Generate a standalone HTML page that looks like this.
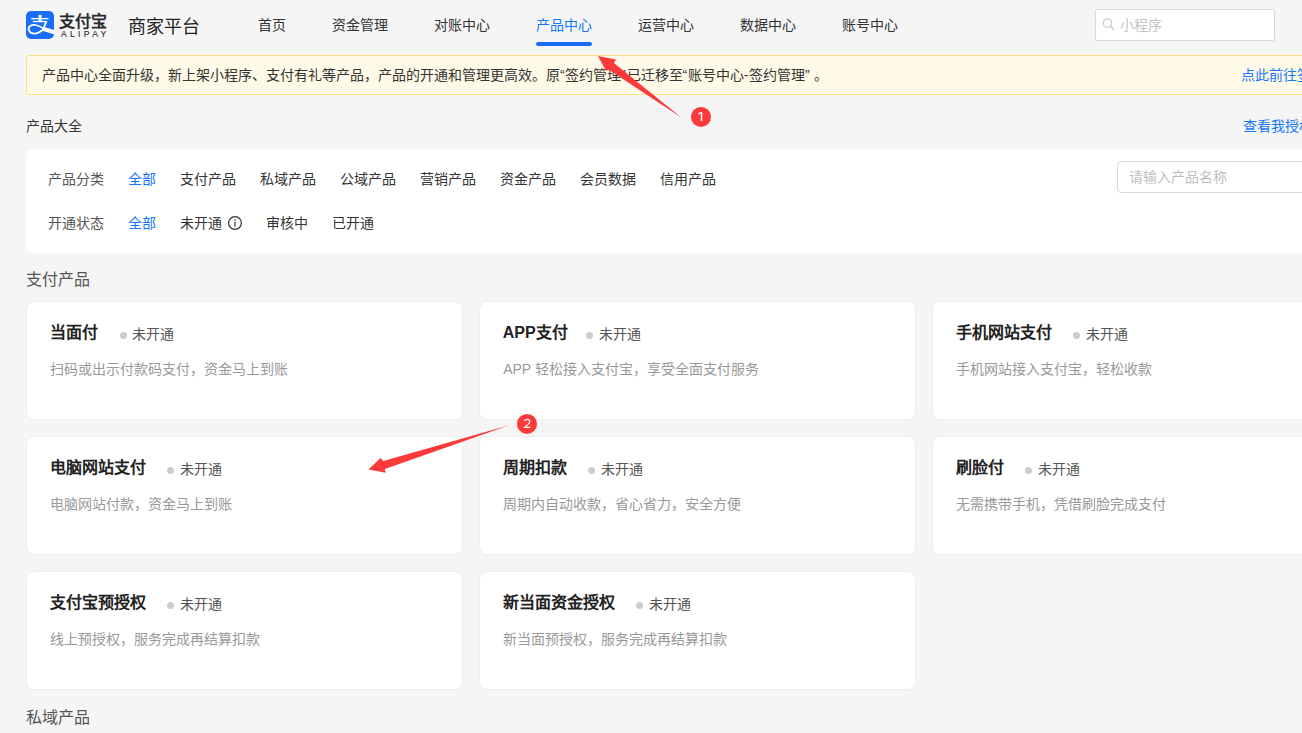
<!DOCTYPE html>
<html lang="zh-CN"><head><meta charset="utf-8">
<style>
*{box-sizing:border-box;margin:0;padding:0}
html,body{width:1302px;height:733px;overflow:hidden}
body{background:#f5f5f5;font-family:"Liberation Sans",sans-serif;color:#333;position:relative}
.abs{position:absolute;white-space:nowrap}
.logo{left:26px;top:11px;width:28px;height:28px;background:#1677ff;border-radius:6px}
.brand{left:59px;top:11.5px;font-size:16px;font-weight:bold;color:#2a2a2a;line-height:20px}
.alipay{left:61px;top:29px;font-size:8.6px;letter-spacing:3.3px;color:#2a2a2a;line-height:10px;-webkit-text-stroke:0.1px #2a2a2a}
.plat{left:128px;top:14px;font-size:18px;line-height:26px;color:#222}
.nav{top:15px;font-size:14px;line-height:20px;color:#333}
.nav.on{color:#1677ff}
.uline{left:536px;top:42px;width:56px;height:4px;border-radius:2px;background:#1b6cf5}
.search{left:1095px;top:9px;width:180px;height:32px;background:#fff;border:1px solid #d9d9d9;border-radius:2px}
.notice{left:26px;top:55px;width:1300px;height:40px;background:#fff9e7;border:1px solid #ffdf80;border-radius:2.5px}
.ntext{left:42px;top:65px;font-size:14px;line-height:20px;color:#333}
.q{letter-spacing:0.6px}
.link,.ft.link{color:#1677ff}
.panel{left:26px;top:149px;width:1300px;height:104px;background:#fff;border-radius:6px}
.ft{top:169px;font-size:14px;line-height:20px;color:#333}
.ft2{top:213px}
.pinput{left:1117px;top:161px;width:220px;height:32px;background:#fff;border:1px solid #d9d9d9;border-radius:4px}
.sec{left:26px;font-size:16px;line-height:22px;color:#555;margin-top:1.4px}
.card{position:absolute;width:437px;height:118px;background:#fff;border-radius:8px;border:1px solid #efefef}
.ct{position:absolute;left:22.8px;top:19px;font-size:16px;font-weight:bold;color:#222;line-height:22px;white-space:nowrap}
.st{position:absolute;top:21.3px;font-size:14px;color:#555;line-height:20px;white-space:nowrap;padding-left:12px}
.st:before{content:"";position:absolute;left:-0.5px;top:7.4px;width:7px;height:7px;border-radius:50%;background:#cccccc}
.dn .ct,.dn .st,.dn .desc{margin-top:1px}
.desc{position:absolute;left:23.2px;top:56.1px;font-size:14px;color:#999;line-height:20px;white-space:nowrap}
</style></head><body>
<svg class="abs" style="left:26px;top:11px" width="28" height="28" viewBox="0 0 28 28"><rect width="28" height="28" rx="5" fill="#1a6df7"/>
<g fill="#fff"><rect x="5.2" y="7" width="17.3" height="1.3"/><rect x="12.6" y="3.9" width="3" height="6.5"/><rect x="6.8" y="9.9" width="14" height="1.3"/>
<polygon points="19.2,10.6 21.4,10.6 19,16.3 16.6,17.6"/>
<polygon points="17.2,15.8 28,18.9 28,23.2 16.4,19.8"/></g>
<path d="M17.5 17.8C13.5 14.3 7.5 12.6 3.8 15.2C1.6 17 2.4 22.2 7.8 22.6C12 22.9 15 20.3 17.6 18.3" fill="none" stroke="#fff" stroke-width="1.7"/>
</svg>
<div class="abs brand">支付宝</div>
<div class="abs alipay">ALIPAY</div>
<div class="abs plat">商家平台</div>
<div class="abs nav" style="left:258px">首页</div>
<div class="abs nav" style="left:332px">资金管理</div>
<div class="abs nav" style="left:434px">对账中心</div>
<div class="abs nav on" style="left:536px">产品中心</div>
<div class="abs nav" style="left:638px">运营中心</div>
<div class="abs nav" style="left:740px">数据中心</div>
<div class="abs nav" style="left:842px">账号中心</div>
<div class="abs uline"></div>
<div class="abs search"></div>
<svg class="abs" style="left:1100px;top:15px" width="20" height="20" viewBox="0 0 20 20"><circle cx="7.5" cy="8.1" r="4.2" fill="none" stroke="#c8c8c8" stroke-width="1.2"/><path d="M10.6 11.3L14 14.7" stroke="#c8c8c8" stroke-width="1.3"/></svg>
<div class="abs" style="left:1120px;top:14.5px;font-size:14px;line-height:20px;color:#c4c4c4">小程序</div>

<div class="abs notice"></div>
<div class="abs ntext">产品中心全面升级，新上架小程序、支付有礼等产品，产品的开通和管理更高效。原<span class="q">“</span>签约管理<span class="q">”</span>已迁移至<span class="q">“</span>账号中心<span class="q">-</span>签约管理<span class="q">”</span> 。</div>
<div class="abs ntext link" style="left:1241px">点此前往签约管理</div>

<div class="abs" style="left:26px;top:116px;font-size:14px;line-height:20px;color:#333">产品大全</div>
<div class="abs link" style="left:1243px;top:116px;font-size:14px;line-height:20px">查看我授权的产品</div>

<div class="abs panel"></div>
<div class="abs ft" style="left:48px;color:#555">产品分类</div>
<div class="abs ft link" style="left:128px">全部</div>
<div class="abs ft" style="left:180px">支付产品</div>
<div class="abs ft" style="left:260px">私域产品</div>
<div class="abs ft" style="left:340px">公域产品</div>
<div class="abs ft" style="left:420px">营销产品</div>
<div class="abs ft" style="left:500px">资金产品</div>
<div class="abs ft" style="left:580px">会员数据</div>
<div class="abs ft" style="left:660px">信用产品</div>
<div class="abs pinput"></div>
<div class="abs" style="left:1129px;top:167px;font-size:14px;line-height:20px;color:#bfbfbf">请输入产品名称</div>

<div class="abs ft ft2" style="left:48px;color:#555">开通状态</div>
<div class="abs ft ft2 link" style="left:128px">全部</div>
<div class="abs ft ft2" style="left:180px">未开通</div>
<svg class="abs" style="left:227px;top:215px" width="16" height="16" viewBox="0 0 16 16"><circle cx="8" cy="8" r="6.4" fill="none" stroke="#333" stroke-width="1.2"/><circle cx="8" cy="5" r="0.8" fill="#333"/><rect x="7.4" y="7" width="1.2" height="4.6" fill="#333"/></svg>
<div class="abs ft ft2" style="left:266px">审核中</div>
<div class="abs ft ft2" style="left:332px">已开通</div>

<div class="abs sec" style="top:268px">支付产品</div>

<div class="card dn" style="left:26px;top:301px;height:119px"><div class="ct">当面付</div><div class="st" style="left:93.3px">未开通</div><div class="desc">扫码或出示付款码支付，资金马上到账</div></div>
<div class="card dn" style="left:479px;top:301px;height:119px"><div class="ct">APP支付</div><div class="st" style="left:106.5px">未开通</div><div class="desc">APP 轻松接入支付宝，享受全面支付服务</div></div>
<div class="card dn" style="left:932px;top:301px;height:119px"><div class="ct">手机网站支付</div><div class="st" style="left:140.5px">未开通</div><div class="desc">手机网站接入支付宝，轻松收款</div></div>

<div class="card dn" style="left:26px;top:436px;height:119px"><div class="ct">电脑网站支付</div><div class="st" style="left:140.5px">未开通</div><div class="desc">电脑网站付款，资金马上到账</div></div>
<div class="card dn" style="left:479px;top:436px;height:119px"><div class="ct">周期扣款</div><div class="st" style="left:108.5px">未开通</div><div class="desc">周期内自动收款，省心省力，安全方便</div></div>
<div class="card dn" style="left:932px;top:436px;height:119px"><div class="ct">刷脸付</div><div class="st" style="left:92.5px">未开通</div><div class="desc">无需携带手机，凭借刷脸完成支付</div></div>

<div class="card dn" style="left:26px;top:571px;height:119px"><div class="ct">支付宝预授权</div><div class="st" style="left:140.5px">未开通</div><div class="desc">线上预授权，服务完成再结算扣款</div></div>
<div class="card dn" style="left:479px;top:571px;height:119px"><div class="ct">新当面资金授权</div><div class="st" style="left:156.5px">未开通</div><div class="desc">新当面预授权，服务完成再结算扣款</div></div>

<div class="abs sec" style="top:706px">私域产品</div>

<svg class="abs" style="left:0;top:0" width="1302" height="733" viewBox="0 0 1302 733">
<polygon points="598,55.9 616,59.4 613.9,62.9 681.6,117.7 608.5,69.5 606,71" fill="#fc3a3a"/>
<circle cx="701" cy="116.9" r="10" fill="#fc3a3a"/><path d="M701.5 112.1V121" stroke="#fff" stroke-width="1.5"/><path d="M698.2 114L701.3 112.4" stroke="#fff" stroke-width="1.3"/>
<polygon points="368.5,469.5 380.6,458 383.3,461.1 509.2,425.3 384.9,469.1 385.7,472.8" fill="#fc3a3a"/>
<circle cx="527" cy="423.9" r="10" fill="#fc3a3a"/><path d="M524.6 421.1C524.8 419.6 525.8 419.3 527.2 419.3C528.8 419.3 529.7 420.2 529.7 421.5C529.7 422.7 529 423.5 527.8 424.6L524.6 427.4H530.3" fill="none" stroke="#fff" stroke-width="1.2"/>
</svg>
</body></html>
